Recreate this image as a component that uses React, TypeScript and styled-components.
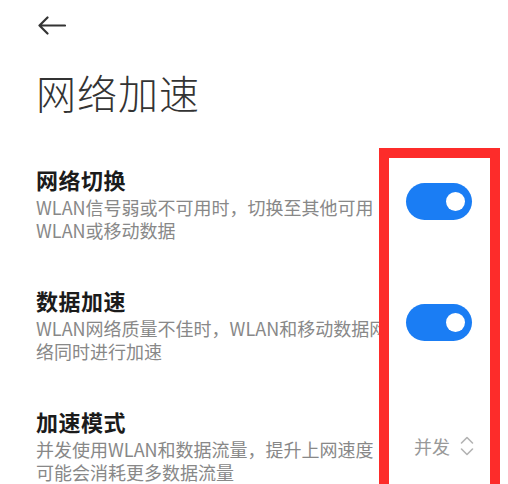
import { FC } from "react";
import styled, { createGlobalStyle } from "styled-components";

const GlobalStyle = createGlobalStyle`
  html, body {
    margin: 0;
    padding: 0;
    background: #fff;
  }
  body {
    font-family: "Noto Sans CJK SC", "Noto Sans", sans-serif;
    -webkit-font-smoothing: antialiased;
  }
`;

const Page = styled.div`
  position: relative;
  width: 508px;
  height: 484px;
  overflow: hidden;
  background: #fff;
  padding: 0 36px;
  box-sizing: border-box;
`;

const TopBar = styled.div`
  height: 50px;
  display: flex;
  align-items: center;
  padding-left: 1px;
`;

const BackButton = styled.button`
  border: none;
  background: none;
  padding: 0;
  display: flex;
  color: #333;
  cursor: pointer;
`;

const PageTitle = styled.h1`
  margin: 18px 0 0;
  font-size: 40px;
  line-height: 48px;
  font-weight: 300;
  color: #333;
  letter-spacing: 1px;
`;

const List = styled.div`
  margin-top: 27px;
  display: flex;
  flex-direction: column;
`;

const Item = styled.div`
  display: flex;
  align-items: center;
  padding: 22px 0;
`;

const TextCol = styled.div`
  flex: 1;
  min-width: 0;
`;

const ItemTitle = styled.div`
  font-size: 22px;
  line-height: 28px;
  font-weight: 600;
  color: #1b1b1b;
  letter-spacing: 0.5px;
`;

const Desc = styled.div`
  margin-top: 3px;
  font-size: 18px;
  line-height: 23px;
  color: #888;
`;

const DescLine = styled.div`
  white-space: nowrap;
`;

const Toggle = styled.div<{ $on: boolean }>`
  flex-shrink: 0;
  width: 66px;
  height: 37px;
  border-radius: 19px;
  background: ${({ $on }) => ($on ? "#1a7df4" : "#d9d9d9")};
  display: flex;
  align-items: center;
  justify-content: ${({ $on }) => ($on ? "flex-end" : "flex-start")};
  padding: 0 7px;
  box-sizing: border-box;
  margin-bottom: 5px;
`;

const Knob = styled.div`
  width: 19px;
  height: 19px;
  border-radius: 50%;
  background: #fff;
`;

const Picker = styled.div`
  flex-shrink: 0;
  display: flex;
  align-items: center;
  gap: 10px;
  margin-right: -2px;
  font-size: 18px;
  color: #999;
`;

const Highlight = styled.div`
  position: absolute;
  left: 379px;
  top: 148px;
  width: 121px;
  height: 360px;
  border: 10px solid #fd2c2a;
  box-sizing: border-box;
  pointer-events: none;
`;

const BackArrow = () => (
  <svg width="29" height="19" viewBox="0 0 29 19" fill="none">
    <path
      d="M28 9.5H2.5M10.5 1.5L2.5 9.5L10.5 17.5"
      stroke="currentColor"
      strokeWidth="2.2"
      strokeLinecap="round"
      strokeLinejoin="round"
    />
  </svg>
);

const UpDown = () => (
  <svg width="14" height="22" viewBox="0 0 14 22" fill="none">
    <path
      d="M1.5 8L7 2.5L12.5 8M1.5 14L7 19.5L12.5 14"
      stroke="#b3b3b3"
      strokeWidth="1.6"
      strokeLinecap="round"
      strokeLinejoin="round"
    />
  </svg>
);

type Row = {
  title: string;
  desc: string[];
  toggle?: boolean;
  value?: string;
};

const rows: Row[] = [
  {
    title: "网络切换",
    desc: ["WLAN信号弱或不可用时，切换至其他可用", "WLAN或移动数据"],
    toggle: true,
  },
  {
    title: "数据加速",
    desc: ["WLAN网络质量不佳时，WLAN和移动数据网", "络同时进行加速"],
    toggle: true,
  },
  {
    title: "加速模式",
    desc: ["并发使用WLAN和数据流量，提升上网速度", "可能会消耗更多数据流量"],
    value: "并发",
  },
];

const App: FC = () => (
  <>
    <GlobalStyle />
    <Page>
      <TopBar>
        <BackButton aria-label="返回">
          <BackArrow />
        </BackButton>
      </TopBar>
      <PageTitle>网络加速</PageTitle>
      <List>
        {rows.map((row) => (
          <Item key={row.title}>
            <TextCol>
              <ItemTitle>{row.title}</ItemTitle>
              <Desc>
                {row.desc.map((line) => (
                  <DescLine key={line}>{line}</DescLine>
                ))}
              </Desc>
            </TextCol>
            {row.toggle !== undefined && (
              <Toggle $on={row.toggle}>
                <Knob />
              </Toggle>
            )}
            {row.value && (
              <Picker>
                {row.value}
                <UpDown />
              </Picker>
            )}
          </Item>
        ))}
      </List>
      <Highlight />
    </Page>
  </>
);

export default App;
